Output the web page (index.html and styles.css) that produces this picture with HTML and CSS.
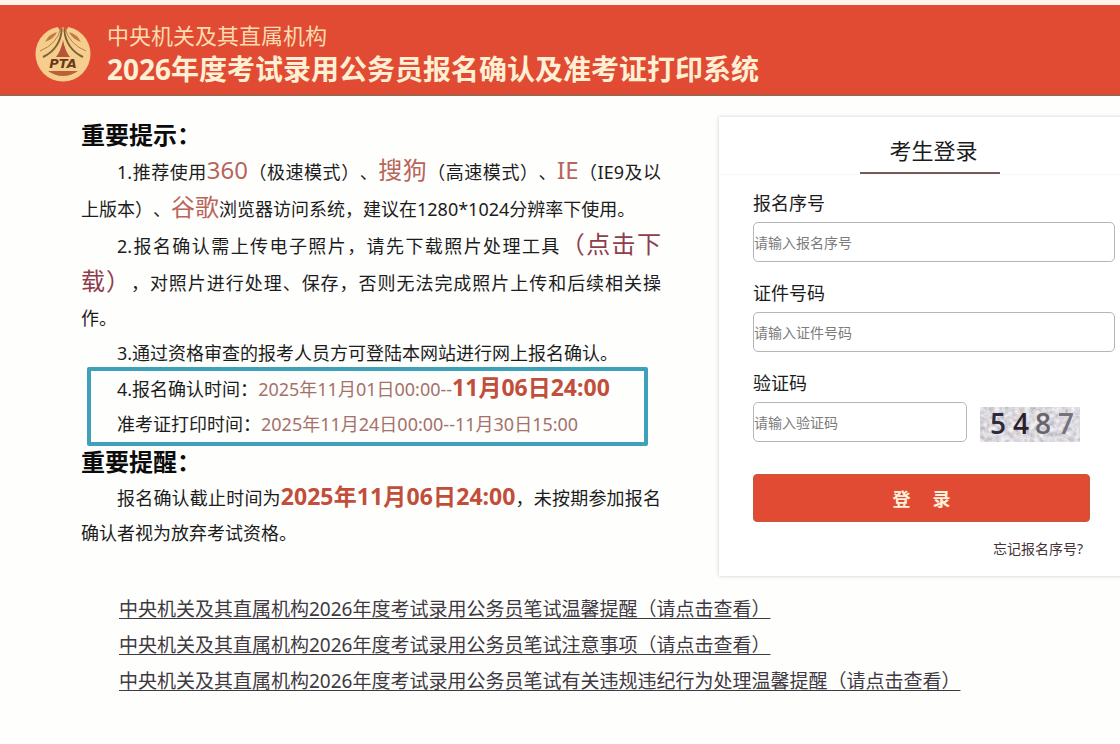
FILE: index.html
```html
<!DOCTYPE html>
<html lang="zh-CN">

<head>
    <meta charset="UTF-8">
    <meta name="viewport" content="width=device-width, initial-scale=1">
    <title>报名确认及准考证打印系统</title>
    <link rel="stylesheet" href="styles.css">
</head>

<body>
    <header class="header">
        <svg class="logo" viewBox="0 0 56 56" role="img" aria-label="PTA">
            <circle cx="28" cy="28" r="27.5" fill="#f5cd8c" />
            <path d="M22 0 H34 L30 6 H26Z" fill="#e14b34" />
            <path d="M10 16 Q14 8 22 6 Q19 13 10 16Z M46 16 Q42 8 34 6 Q37 13 46 16Z" fill="#c07a45" />
            <path d="M26 2 Q22 18 5 25 M30 2 Q34 18 51 25" fill="none" stroke="#b98049" stroke-width="1" />
            <path d="M27 3 Q25 23 8 31 M29 3 Q31 23 48 31" fill="none" stroke="#7e6236" stroke-width="2" />
            <path d="M28 1 V14" stroke="#f8dca2" stroke-width="1" />
            <path d="M28 14 Q30 25 35 31 H21 Q26 25 28 14Z" fill="#b85238" />
            <text x="28" y="42" class="logo-text">PTA</text>
            <path d="M13 45 H43 Q36 50 28 50 Q20 50 13 45Z" fill="#b86238" />
        </svg>
        <div class="titles">
            <p class="org">中央机关及其直属机构</p>
            <h1>2026年度考试录用公务员报名确认及准考证打印系统</h1>
        </div>
    </header>

    <main class="container">
        <section class="notice">
            <h2>重要提示：</h2>
            <p>1.推荐使用<span class="big">360</span>（极速模式）、<span class="big">搜狗</span>（高速模式）、<span class="big">IE</span>（IE9及以上版本）、<span class="big">谷歌</span>浏览器访问系统，建议在1280*1024分辨率下使用。</p>
            <p>2.报名确认需上传电子照片，请先下载照片处理工具<a class="download" href="#">（点击下载）</a>，对照片进行处理、保存，否则无法完成照片上传和后续相关操作。</p>
            <p>3.通过资格审查的报考人员方可登陆本网站进行网上报名确认。</p>
            <div class="time-box">
                <p>4.报名确认时间：<span class="date">2025年11月01日00:00--</span><strong>11月06日24:00</strong></p>
                <p>准考证打印时间：<span class="date">2025年11月24日00:00--11月30日15:00</span></p>
            </div>
            <h2>重要提醒：</h2>
            <p>报名确认截止时间为<strong>2025年11月06日24:00</strong>，未按期参加报名确认者视为放弃考试资格。</p>
        </section>

        <section class="login">
            <h2 class="login-title"><span>考生登录</span></h2>
            <form class="login-form">
                <label for="regno">报名序号</label>
                <input type="text" id="regno" name="regno" placeholder="请输入报名序号">

                <label for="idno">证件号码</label>
                <input type="text" id="idno" name="idno" placeholder="请输入证件号码">

                <label for="code">验证码</label>
                <div class="code-row">
                    <input type="text" id="code" name="code" placeholder="请输入验证码">
                    <svg class="captcha" viewBox="0 0 100 35" role="img" aria-label="验证码">
                        <filter id="noise" x="0" y="0" width="100%" height="100%">
                            <feTurbulence type="fractalNoise" baseFrequency="0.2" numOctaves="3" seed="4" />
                            <feColorMatrix values="0.7 0 0 0 0.37  0.7 0 0 0 0.35  0.7 0 0 0 0.39  0 0 0 0 1" />
                        </filter>
                        <rect width="100" height="35" filter="url(#noise)" />
                        <g class="captcha-text">
                            <text x="18" y="27" fill="#2c2a3c">5</text>
                            <text x="41" y="27" fill="#2b2029">4</text>
                            <text x="63" y="27" fill="#66646c">8</text>
                            <text x="86" y="27" fill="#74727c">7</text>
                        </g>
                    </svg>
                </div>

                <button type="submit">登<span class="gap"></span>录</button>
                <a class="forgot" href="#">忘记报名序号?</a>
            </form>
        </section>
    </main>

    <nav class="links">
        <a href="#">中央机关及其直属机构2026年度考试录用公务员笔试温馨提醒（请点击查看）</a>
        <a href="#">中央机关及其直属机构2026年度考试录用公务员笔试注意事项（请点击查看）</a>
        <a href="#">中央机关及其直属机构2026年度考试录用公务员笔试有关违规违纪行为处理温馨提醒（请点击查看）</a>
    </nav>
</body>

</html>
```
FILE: styles.css
```css
* {
    box-sizing: border-box;
}

body {
    margin: 0;
    background-color: #fefefd;
    color: #1c1c1c;
    font-family: "Noto Sans", "Noto Sans CJK SC", sans-serif;
    font-size: 18px;
    line-height: 36px;
    overflow-x: hidden;
    text-spacing-trim: space-all;
}

h1,
h2,
p {
    margin: 0;
}

.header {
    display: flex;
    align-items: center;
    gap: 16px;
    height: 96px;
    padding: 4px 35px 0;
    background-color: #e14b34;
    border-top: 5px solid #fff3ea;
    border-bottom: 2px solid #a5604a;
}

.logo {
    width: 56px;
    height: 56px;
    flex: none;
    margin-top: 4px;
}

.logo-text {
    font-family: "DejaVu Sans", sans-serif;
    font-size: 13px;
    font-weight: bold;
    font-style: italic;
    text-anchor: middle;
    fill: #6b3a1c;
}

.titles {
    line-height: 34px;
}

.org {
    color: #fbdcae;
    font-size: 22px;
}

.header h1 {
    color: #fff0d4;
    font-size: 28px;
    font-weight: bold;
}

.container {
    display: flex;
    align-items: flex-start;
    gap: 58px;
    margin-right: -20px;
    padding: 21px 0 0 81px;
}

.notice {
    flex: 580 1 0;
    text-align: justify;
}

.notice h2 {
    color: #0c0c0c;
    font-size: 24px;
    line-height: 36px;
}

.notice p {
    line-height: 35px;
    text-indent: 36px;
}

.big {
    color: #b8655a;
    font-size: 24px;
    line-height: 34px;
}

.download {
    color: #8e3d4e;
    font-size: 24px;
    line-height: 34px;
    text-decoration: none;
}

.date {
    color: #a5716a;
}

.notice strong {
    color: #c24e3a;
    font-size: 23px;
    line-height: 32px;
}

/* frame reaches over the lines above and below */
.notice .time-box {
    margin: -4px 13px -2px 6px;
    padding-left: 26px;
    border: 4px solid #3fa0b9;
    border-radius: 2px;
}

.notice .time-box p {
    text-indent: 0;
}

.login {
    flex: 421 1 0;
    height: 459px;
    background-color: #fff;
    box-shadow: 0 0 4px rgba(0, 0, 0, 0.2);
}

.login-title {
    display: flex;
    justify-content: center;
    border-bottom: 1px solid #f7f7f7;
    font-size: 22px;
    font-weight: normal;
    line-height: 34px;
}

.login-title span {
    width: 140px;
    padding: 16px 0 5px 8px;
    border-bottom: 2px solid #755b59;
    text-align: center;
}

.login-form {
    display: flex;
    flex-direction: column;
    padding: 10px 25px 0 34px;
}

.login-form label {
    margin-bottom: 1px;
}

.login-form input {
    width: 100%;
    height: 40px;
    margin-bottom: 13px;
    padding: 0;
    border: 1px solid #b5b5b5;
    border-radius: 5px;
    background-color: #fff;
    color: #1c1c1c;
    font-family: inherit;
    font-size: 14px;
}

.login-form input::placeholder {
    color: #7c7c7c;
    opacity: 1;
}

.code-row {
    display: flex;
    align-items: flex-start;
    gap: 13px;
}

.code-row input {
    width: 214px;
}

.captcha {
    width: 100px;
    height: 35px;
    margin-top: 5px;
    overflow: visible;
}

.captcha-text {
    font-family: "Open Sans", sans-serif;
    font-size: 28px;
    font-weight: 600;
    text-anchor: middle;
}

.login-form button {
    height: 48px;
    margin: 19px 25px 0 0;
    border: 1px solid #c4573c;
    border-radius: 4px;
    background-color: #e14b34;
    color: #fff0dc;
    font-family: inherit;
    font-size: 18px;
    font-weight: bold;
    cursor: pointer;
}

.gap {
    display: inline-block;
    width: 22px;
}

.forgot {
    align-self: flex-end;
    margin: 9px 32px 0 0;
    color: #443338;
    font-size: 14px;
    text-decoration: none;
}

.links {
    display: flex;
    flex-direction: column;
    align-items: flex-start;
    padding: 15px 0 0 119px;
}

.links a {
    color: #3f3a42;
    font-size: 19px;
    text-underline-offset: 2px;
}
```
